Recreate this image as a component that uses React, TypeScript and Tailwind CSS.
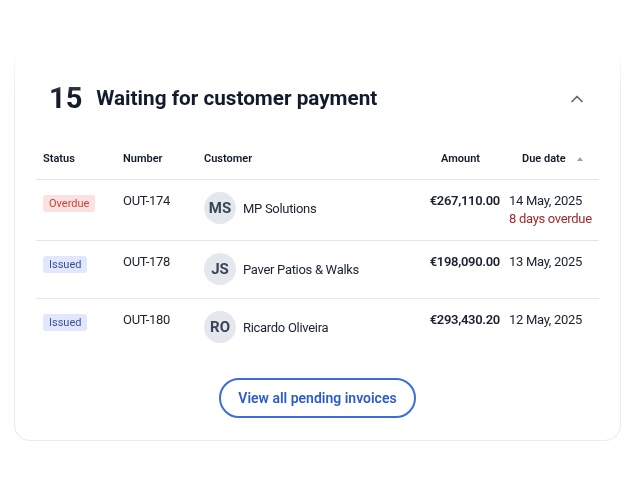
import { ChevronUp } from 'lucide-react'

type Row = {
  status: 'Overdue' | 'Issued'
  number: string
  initials: string
  customer: string
  amount: string
  due: string
  note?: string
}

const rows: Row[] = [
  { status: 'Overdue', number: 'OUT-174', initials: 'MS', customer: 'MP Solutions', amount: '€267,110.00', due: '14 May, 2025', note: '8 days overdue' },
  { status: 'Issued', number: 'OUT-178', initials: 'JS', customer: 'Paver Patios & Walks', amount: '€198,090.00', due: '13 May, 2025' },
  { status: 'Issued', number: 'OUT-180', initials: 'RO', customer: 'Ricardo Oliveira', amount: '€293,430.20', due: '12 May, 2025' },
]

function Badge({ status }: { status: Row['status'] }) {
  const overdue = status === 'Overdue'
  return (
    <span
      className={
        overdue
          ? 'inline-block rounded-[3px] bg-[#fbe1df] px-[6px] text-[11px] leading-[17px] tracking-normal text-[#c8433c]'
          : 'inline-block rounded-[3px] bg-[#e1e8fc] px-[6px] text-[11px] leading-[17px] tracking-normal text-[#3b4f9e]'
      }
    >
      {status}
    </span>
  )
}

export default function App() {
  return (
    <div className="min-h-[480px] w-[640px] bg-white pt-[44px] font-['Roboto',sans-serif] text-[#121a2b]">
      <div className="ml-[14px] w-[607px] rounded-[16px] border border-[#ebebeb] bg-white px-[21px] pt-[34px] pb-[22px] shadow-[0_3px_7px_rgba(0,0,0,0.13)] [mask-image:linear-gradient(to_bottom,transparent_0,black_50px)]">
        <div className="flex h-[40px] items-center justify-between pl-[13px] pr-[12px]">
          <div className="flex items-center gap-[14px]">
            <span className="text-[29px] font-bold">15</span>
            <span className="text-[20.7px] font-bold">Waiting for customer payment</span>
          </div>
          <ChevronUp size={20} strokeWidth={2} className="text-[#5c6579]" />
        </div>

        <div className="mt-[20px] grid h-[41px] grid-cols-[80px_81px_1fr_110px_92px] items-center border-b border-[#e3e5e9] px-[7px] text-[11px] font-semibold">
          <span>Status</span>
          <span>Number</span>
          <span>Customer</span>
          <span className="pr-[20px] text-right">Amount</span>
          <span className="flex items-center pl-[22px] whitespace-nowrap">
            Due date
            <svg width="6" height="4" viewBox="0 0 6 4" className="ml-[11px]">
              <path d="M3 0 L6 4 L0 4 Z" fill="#9aa1ad" />
            </svg>
          </span>
        </div>

        {rows.map((r, i) => (
          <div
            key={r.number}
            className={
              'grid min-h-[58px] grid-cols-[80px_81px_1fr_110px_92px] items-start px-[7px] pt-[12px] pb-[12px] text-[13px] tracking-[-0.3px] text-[#1a2131] ' +
              (i < rows.length - 1 ? 'border-b border-[#e3e5e9]' : '')
            }
          >
            <div className="pt-[1px]">
              <Badge status={r.status} />
            </div>
            <span className="leading-[18px]">{r.number}</span>
            <div className="flex items-center gap-[7px]">
              <span className="flex h-[32px] w-[32px] items-center justify-center rounded-full bg-[#e4e7ed] text-[15px] font-bold tracking-normal text-[#3a4456]">
                {r.initials}
              </span>
              <span className="mt-[1px]">{r.customer}</span>
            </div>
            <span className="text-right font-semibold leading-[18px] whitespace-nowrap">{r.amount}</span>
            <div className="pl-[9px] leading-[18px] whitespace-nowrap">
              <div>{r.due}</div>
              {r.note && <div className="text-[#a02a2a]">{r.note}</div>}
            </div>
          </div>
        ))}

        <div className="mt-[21px] flex justify-center">
          <button
            type="button"
            className="h-[40px] w-[197px] rounded-full border-2 border-[#3c6ddb] text-[14px] font-semibold text-[#2b5bcc]"
          >
            View all pending invoices
          </button>
        </div>
      </div>
    </div>
  )
}
